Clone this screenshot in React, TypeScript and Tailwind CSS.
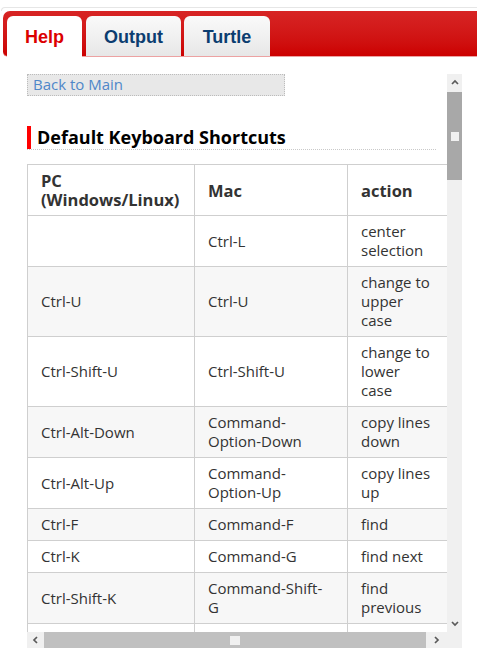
import React from "react";

const rows: [string, string, string][] = [
  ["", "Ctrl-L", "center selection"],
  ["Ctrl-U", "Ctrl-U", "change to upper case"],
  ["Ctrl-Shift-U", "Ctrl-Shift-U", "change to lower case"],
  ["Ctrl-Alt-Down", "Command-Option-Down", "copy lines down"],
  ["Ctrl-Alt-Up", "Command-Option-Up", "copy lines up"],
  ["Ctrl-F", "Command-F", "find"],
  ["Ctrl-K", "Command-G", "find next"],
  ["Ctrl-Shift-K", "Command-Shift-G", "find previous"],
  ["\u00a0", "\u00a0", "\u00a0"],
];

function Chevron({ dir }: { dir: "up" | "down" | "left" | "right" }) {
  const pts: Record<string, string> = {
    up: "1,5 4,2 7,5",
    down: "1,2 4,5 7,2",
    left: "5,1 2,4 5,7",
    right: "2,1 5,4 2,7",
  };
  return (
    <svg width="8" height="8" viewBox="0 0 8 8" className="block">
      <polyline points={pts[dir]} fill="none" stroke="#5a5a5a" strokeWidth="1.7" />
    </svg>
  );
}

export default function App() {
  const body = "font-['Open_Sans',sans-serif]";
  return (
    <div className="w-[477px] h-[662px] bg-white overflow-hidden">
      <div className="mt-[7px] ml-[1px] h-[4px] border-t border-l border-[#e6e6e6] rounded-tl-[6px]" />
      <div className="ml-[3px] h-[46px] flex items-end rounded-tl-[7px] rounded-bl-[5px] bg-gradient-to-b from-[#d72424] to-[#cc0000] border-b border-[#eca2a2] font-['Liberation_Sans',Arial,sans-serif] font-bold text-[18px]">
        <div className="ml-[4px] w-[75px] h-[41px] -mb-[1px] bg-white rounded-t-[6px] flex items-center justify-center text-[#dc0000] pt-[1px]">
          Help
        </div>
        <div className="ml-[4px] w-[95px] h-[40px] bg-gradient-to-b from-[#fafafa] to-[#e7e7e7] rounded-t-[6px] flex items-center justify-center text-[#0b3d70] pt-[2px]">
          Output
        </div>
        <div className="ml-[3px] w-[86px] h-[40px] bg-gradient-to-b from-[#fafafa] to-[#e7e7e7] rounded-t-[6px] flex items-center justify-center text-[#0b3d70] pt-[2px]">
          Turtle
        </div>
      </div>

      <div className="mt-[17px] ml-[27px] w-[435px] flex flex-col">
        <div className="flex h-[558px]">
          <div className={`w-[420px] h-[558px] overflow-hidden ${body}`}>
            <div className="w-[258px] h-[22px] border border-dotted border-[#bcbcbc] bg-[#e8e8e8] pl-[5px] text-[15px] leading-[18px] text-[#4f87c8]">
              Back to Main
            </div>
            <div className="mt-[30px] w-[409px] flex border-b border-dotted border-[#c9c9c9]">
              <div className="w-[4px] h-[23px] bg-[#ff0000]" />
              <div className="ml-[6px] text-[18px] font-bold leading-[22px] text-black whitespace-nowrap">
                Default Keyboard Shortcuts
              </div>
            </div>
            <table className="mt-[14px] w-[450px] table-fixed border-collapse text-[15px] leading-[19px] text-[#333]">
              <colgroup>
                <col className="w-[167px]" />
                <col className="w-[153px]" />
                <col className="w-[130px]" />
              </colgroup>
              <thead>
                <tr className="bg-white">
                  <th className="border border-[#cfcfcf] pl-[13px] pr-[8px] py-[6px] text-left align-middle font-bold text-[16.5px] text-[#333]">
                    PC (Windows/Linux)
                  </th>
                  <th className="border border-[#cfcfcf] pl-[13px] pr-[10px] py-[6px] text-left align-middle font-bold text-[16.5px] text-[#333]">
                    Mac
                  </th>
                  <th className="border border-[#cfcfcf] pl-[13px] pr-[44px] py-[6px] text-left align-middle font-bold text-[16.5px] text-[#333]">
                    action
                  </th>
                </tr>
              </thead>
              <tbody>
                {rows.map((r, i) => (
                  <tr key={i} className={i % 2 === 1 ? "bg-[#f7f7f7]" : "bg-white"}>
                    <td className="border border-[#cfcfcf] pl-[13px] pr-[10px] py-[6px] align-middle">{r[0]}</td>
                    <td className="border border-[#cfcfcf] pl-[13px] pr-[21px] py-[6px] align-middle">{r[1]}</td>
                    <td className="border border-[#cfcfcf] pl-[13px] pr-[44px] py-[6px] align-middle">{r[2]}</td>
                  </tr>
                ))}
              </tbody>
            </table>
          </div>
          <div className="w-[15px] h-[558px] bg-[#f0f0f0] flex flex-col">
            <div className="h-[18px] flex items-center justify-center">
              <Chevron dir="up" />
            </div>
            <div className="h-[88px] bg-[#a8a8a8] flex items-center justify-center">
              <div className="w-[8px] h-[9px] bg-[#f0f0f0]" />
            </div>
            <div className="flex-1" />
            <div className="h-[17px] flex items-center justify-center">
              <Chevron dir="down" />
            </div>
          </div>
        </div>
        <div className="flex h-[16px]">
          <div className="w-[420px] h-[16px] bg-[#f0f0f0] flex">
            <div className="w-[17px] flex items-center justify-center">
              <Chevron dir="left" />
            </div>
            <div className="w-[382px] bg-[#c0c0c0] flex items-center justify-center">
              <div className="w-[10px] h-[9px] bg-[#f0f0f0]" />
            </div>
            <div className="flex-1 flex items-center justify-center">
              <Chevron dir="right" />
            </div>
          </div>
          <div className="w-[15px] h-[16px] bg-[#f0f0f0]" />
        </div>
      </div>
    </div>
  );
}
